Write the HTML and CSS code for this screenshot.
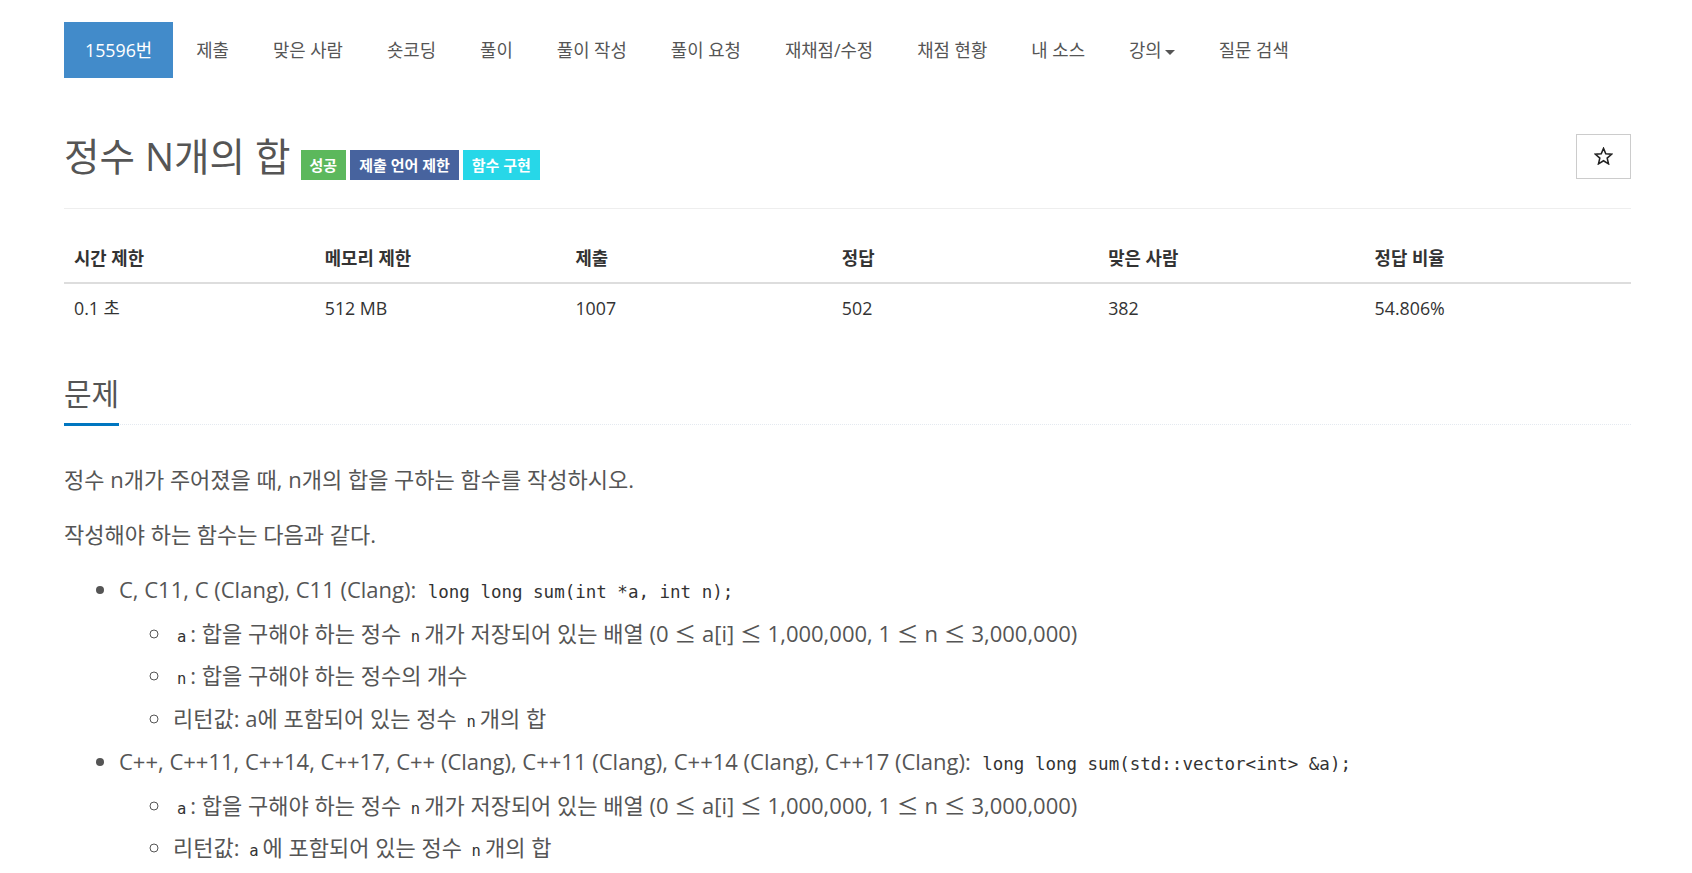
FILE: index.html
```html
<!DOCTYPE html>
<html lang="ko">
<head>
  <meta charset="UTF-8" />
  <title>15596번: 정수 N개의 합</title>
  <link rel="stylesheet" href="styles.css">
</head>
<body>

  <div class="container">
    <ul class="nav">
      <li class="active"><a href="#">15596번</a></li>
      <li><a href="#">제출</a></li>
      <li><a href="#">맞은 사람</a></li>
      <li><a href="#">숏코딩</a></li>
      <li><a href="#">풀이</a></li>
      <li><a href="#">풀이 작성</a></li>
      <li><a href="#">풀이 요청</a></li>
      <li><a href="#">재채점/수정</a></li>
      <li><a href="#">채점 현황</a></li>
      <li><a href="#">내 소스</a></li>
      <li><a href="#">강의<span class="caret"></span></a></li>
      <li><a href="#">질문 검색</a></li>
    </ul>

    <div class="page-header">
      <div class="title-group">
        <h1 id="problem_title">정수 N개의 합</h1>
        <div class="labels">
          <span class="label label-success">성공</span>
          <span class="label label-lang">제출 언어 제한</span>
          <span class="label label-func">함수 구현</span>
        </div>
      </div>
      <button class="star-btn" type="button" title="즐겨찾기">
        <svg width="19" height="18" viewBox="0 0 24 23">
          <path d="M12 1.8l2.9 6.9 7.4.6-5.6 4.9 1.7 7.3L12 17.6l-6.4 3.9 1.7-7.3-5.6-4.9 7.4-.6z" fill="none" stroke="#222" stroke-width="2" stroke-linejoin="miter"/>
        </svg>
      </button>
    </div>

    <table class="info-table">
      <thead>
        <tr>
          <th style="width: 16%">시간 제한</th>
          <th style="width: 16%">메모리 제한</th>
          <th style="width: 17%">제출</th>
          <th style="width: 17%">정답</th>
          <th style="width: 17%">맞은 사람</th>
          <th style="width: 17%">정답 비율</th>
        </tr>
      </thead>
      <tbody>
        <tr>
          <td>0.1 초</td>
          <td>512 MB</td>
          <td>1007</td>
          <td>502</td>
          <td>382</td>
          <td>54.806%</td>
        </tr>
      </tbody>
    </table>

    <section class="problem-section">
      <div class="headline">
        <h2>문제</h2>
      </div>
      <div id="problem_description" class="problem-text">
        <p>정수 n개가 주어졌을 때, n개의 합을 구하는 함수를 작성하시오.</p>
        <p>작성해야 하는 함수는 다음과 같다.</p>
        <ul>
          <li>C, C11, C (Clang), C11 (Clang):&nbsp; <code>long long sum(int *a, int n);</code>
            <ul>
              <li><code class="var">a</code>: 합을 구해야 하는 정수 <code class="var">n</code>개가 저장되어 있는 배열 (0 <span class="le">≤</span> a[i] <span class="le">≤</span> 1,000,000, 1 <span class="le">≤</span> n <span class="le">≤</span> 3,000,000)</li>
              <li><code class="var">n</code>: 합을 구해야 하는 정수의 개수</li>
              <li>리턴값: a에 포함되어 있는 정수 <code class="var">n</code>개의 합</li>
            </ul>
          </li>
          <li>C++, C++11, C++14, C++17, C++ (Clang), C++11 (Clang), C++14 (Clang), C++17 (Clang):&nbsp; <code>long long sum(std::vector&lt;int&gt; &amp;a);</code>
            <ul>
              <li><code class="var">a</code>: 합을 구해야 하는 정수 <code class="var">n</code>개가 저장되어 있는 배열 (0 <span class="le">≤</span> a[i] <span class="le">≤</span> 1,000,000, 1 <span class="le">≤</span> n <span class="le">≤</span> 3,000,000)</li>
              <li>리턴값: <code class="var">a</code>에 포함되어 있는 정수 <code class="var">n</code>개의 합</li>
            </ul>
          </li>
        </ul>
      </div>
    </section>
  </div>

</body>
</html>
```

FILE: styles.css
```css
/* Reset some default styles */
* {
  box-sizing: border-box;
}

body {
  margin: 0;
  font-family: 'Open Sans', 'Noto Sans CJK KR', sans-serif;
  font-size: 16px;
  color: #333;
  background: #fff;
}

.container {
  width: 1567px;
  margin-left: 64px;
}

/* top menu */
.nav {
  display: flex;
  list-style: none;
  margin: 22px 0 0;
  padding: 0;
  font-size: 17.8px;
}

.nav li + li {
  margin-left: 2px;
}

.nav a {
  display: block;
  padding: 0 21px;
  line-height: 56px;
  color: #555;
  text-decoration: none;
}

.nav li.active a {
  background-color: #428bca;
  color: #fff;
}

.caret {
  display: inline-block;
  width: 0;
  height: 0;
  margin-left: 3px;
  vertical-align: middle;
  border-top: 5px solid #555;
  border-left: 5px solid transparent;
  border-right: 5px solid transparent;
}

/* title */
.page-header {
  display: flex;
  justify-content: space-between;
  align-items: center;
  margin-top: 54px;
  padding-bottom: 28px;
  border-bottom: 1px solid #eee;
}

.title-group {
  display: flex;
  align-items: center;
}

h1 {
  margin: 0;
  font-size: 38.6px;
  line-height: 44px;
  font-weight: 400;
  color: #555;
}

.labels {
  display: flex;
  gap: 4px;
  margin-left: 10px;
  margin-top: 18px;
}

.label {
  display: inline-block;
  padding: 0 9px;
  font-size: 15px;
  line-height: 30px;
  font-weight: 700;
  color: #fff;
}

.label-success {
  background-color: #5cb85c;
}

.label-lang {
  background-color: #47639e;
}

.label-func {
  background-color: #27d7e8;
}

.star-btn {
  display: flex;
  align-items: center;
  justify-content: center;
  width: 55px;
  height: 45px;
  padding: 0;
  border: 1px solid #ccc;
  background: #fff;
  cursor: pointer;
}

/* limits table */
.info-table {
  width: 100%;
  margin-top: 25px;
  border-collapse: collapse;
  font-size: 17.8px;
}

.info-table th,
.info-table td {
  padding: 12px 10px;
  line-height: 24px;
  text-align: left;
}

.info-table th {
  font-weight: 700;
  border-bottom: 2px solid #ddd;
}

/* problem text */
.problem-section {
  margin-top: 45px;
}

.headline {
  border-bottom: 1px dotted #e4e9f0;
}

.headline h2 {
  display: inline-block;
  margin: 0 0 -2px;
  padding-bottom: 12px;
  font-size: 30px;
  line-height: 34px;
  font-weight: 400;
  color: #555;
  border-bottom: 3px solid #0076c0;
}

.problem-text {
  margin-top: 33px;
  font-size: 22px;
  line-height: 43px;
  color: #555;
}

.problem-text p {
  margin: 0 0 12px;
}

.problem-text ul {
  margin: 0;
  padding-left: 55px;
}

.problem-text li {
  height: 43px;
}

.problem-text li:has(ul) {
  height: auto;
}

.problem-text ul ul {
  padding-left: 54px;
  list-style: circle;
}

.le {
  font-family: 'Noto Sans CJK KR', sans-serif;
}

code {
  font-family: 'DejaVu Sans Mono', 'Liberation Mono', monospace;
  font-size: 17.5px;
  line-height: 1;
  color: #333;
}

code.var {
  font-size: 15.5px;
  padding: 0 4px;
}
```
